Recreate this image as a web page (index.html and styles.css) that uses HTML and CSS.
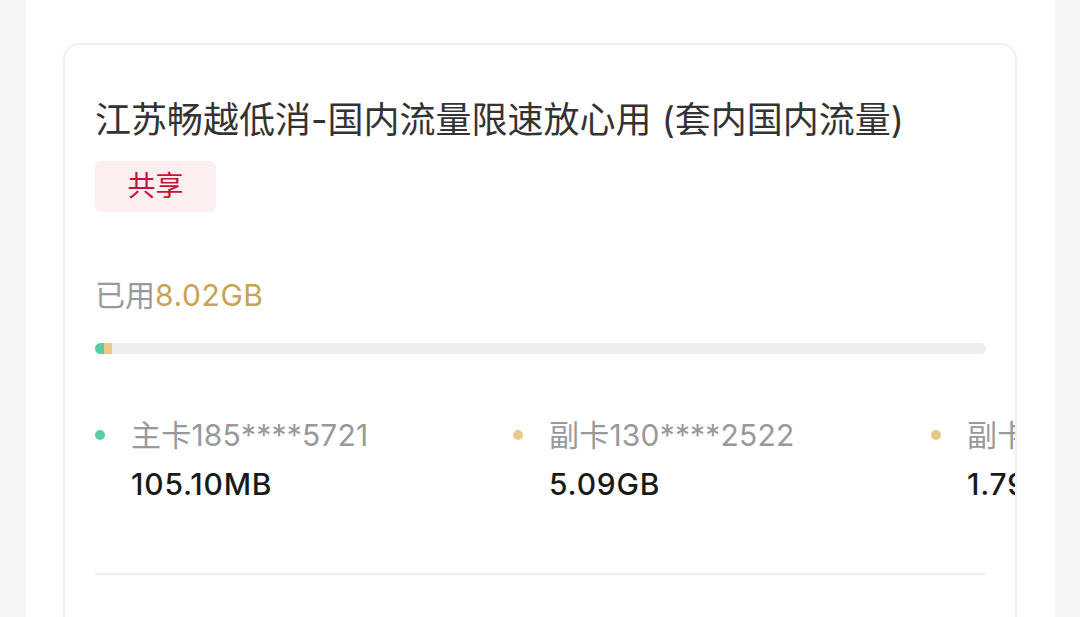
FILE: index.html
```html
<!DOCTYPE html>
<html lang="zh-CN">
<head>
    <meta charset="UTF-8">
    <meta name="viewport" content="width=device-width, initial-scale=1.0">
    <title>流量详情</title>
    <link rel="stylesheet" href="styles.css">
</head>
<body>
    <div class="page">
        <div class="card">
            <p class="plan-title">江苏畅越低消-国内流量限速放心用 (套内国内流量)</p>
            <span class="tag">共享</span>

            <p class="used">已用<span class="used-value">8.02GB</span></p>

            <div class="bar">
                <span class="bar-part green" style="width: 9px;"></span>
                <span class="bar-part yellow" style="width: 8px;"></span>
            </div>

            <div class="legend">
                <div class="legend-item">
                    <span class="dot green"></span>
                    <div>
                        <p class="legend-label">主卡185****5721</p>
                        <p class="legend-value">105.10MB</p>
                    </div>
                </div>
                <div class="legend-item">
                    <span class="dot yellow"></span>
                    <div>
                        <p class="legend-label">副卡130****2522</p>
                        <p class="legend-value">5.09GB</p>
                    </div>
                </div>
                <div class="legend-item">
                    <span class="dot yellow"></span>
                    <div>
                        <p class="legend-label">副卡131****0876</p>
                        <p class="legend-value">1.79GB</p>
                    </div>
                </div>
            </div>

            <div class="divider"></div>
        </div>
    </div>
</body>
</html>
```

FILE: styles.css
```css
body {
    margin: 0;
    background-color: #f5f5f5;
    font-family: Inter, "Noto Sans CJK SC", sans-serif;
    height: 617px;
    overflow: hidden;
}

p {
    margin: 0;
}

.page {
    margin: 0 25px 0 26px;
    background-color: white;
    padding: 43px 38px 0 37px;
    height: 700px;
}

.card {
    border: 2px solid #eeeeee;
    border-radius: 16px;
    padding: 53px 29px 60px 30px;
    height: 700px;
}

.plan-title {
    font-size: 36px;
    line-height: 44px;
    color: #333333;
    white-space: nowrap;
}

.tag {
    display: inline-block;
    margin-top: 19px;
    width: 121px;
    height: 51px;
    line-height: 51px;
    text-align: center;
    border-radius: 6px;
    background-color: #fdeef0;
    color: #c3143a;
    font-size: 28px;
    vertical-align: top;
}

.used {
    margin-top: 63px;
    font-size: 30px;
    line-height: 40px;
    color: #999999;
}

.used-value {
    color: #c9a354;
    letter-spacing: 0.6px;
}

.bar {
    display: flex;
    margin-top: 28px;
    height: 11px;
    border-radius: 6px;
    background-color: #eeeeee;
    overflow: hidden;
}

.bar-part {
    height: 100%;
}

.green {
    background-color: #5ccca5;
}

.yellow {
    background-color: #e8c98a;
}

.legend {
    display: flex;
    margin-top: 59px;
    margin-right: -29px;
    overflow: hidden;
}

.legend-item {
    display: flex;
    flex: 0 0 418px;
    gap: 26px;
}

.dot {
    flex: 0 0 10px;
    height: 10px;
    border-radius: 50%;
    margin-top: 17px;
}

.legend-label {
    font-size: 30px;
    line-height: 44px;
    letter-spacing: 0.2px;
    color: #999999;
    white-space: nowrap;
}

.legend-value {
    margin-top: 5px;
    font-size: 30px;
    line-height: 44px;
    letter-spacing: 0.8px;
    font-weight: 500;
    color: #1a1a1a;
    white-space: nowrap;
}

.divider {
    margin-top: 67px;
    height: 2px;
    background-color: #f0f0f0;
}
```
